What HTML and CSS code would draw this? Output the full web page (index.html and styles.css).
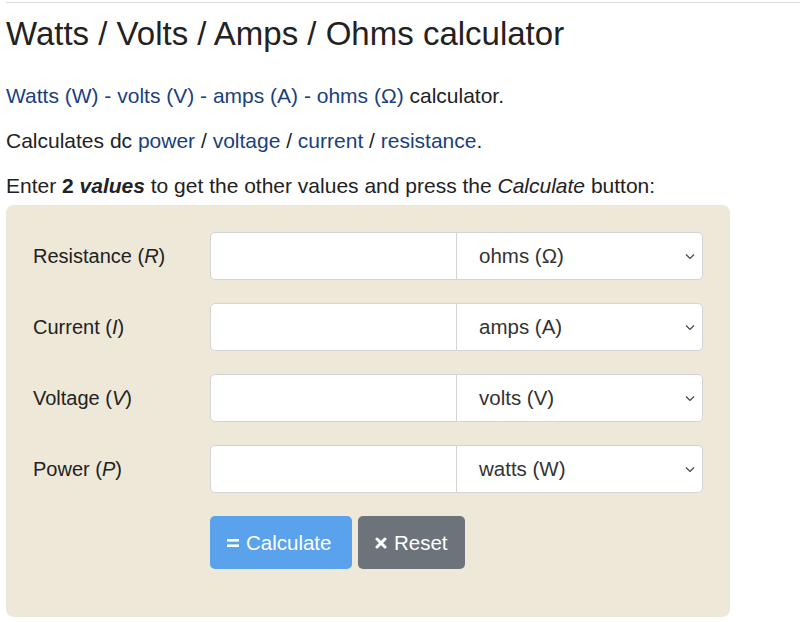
FILE: index.html
```html
<!DOCTYPE html>
<html>
<head>
<meta charset="utf-8">
<link rel="stylesheet" href="styles.css">
</head>
<body>
<div class="page">
  <hr class="topline">
  <h1 class="title">Watts / Volts / Amps / Ohms calculator</h1>
  <p class="intro"><span class="lk"><a href="#">Watts (W)</a> - <a href="#">volts (V)</a> - <a href="#">amps (A)</a> - <a href="#">ohms (Ω)</a></span> calculator.</p>
  <p class="intro">Calculates dc <a href="#">power</a> / <a href="#">voltage</a> / <a href="#">current</a> / <a href="#">resistance</a>.</p>
  <p class="intro">Enter <b>2 <i>values</i></b> to get the other values and press the <i>Calculate</i> button:</p>
  <form class="panel">
    <label class="lbl">Resistance (<i>R</i>)</label>
    <div class="group">
      <input class="num" type="text">
      <div class="sel"><span>ohms (Ω)</span><svg class="chev" width="10" height="7" viewBox="0 0 10 7"><path d="M1 1.5 L5 5.5 L9 1.5" fill="none" stroke="#444" stroke-width="1.2"/></svg></div>
    </div>
    <label class="lbl">Current (<i>I</i>)</label>
    <div class="group">
      <input class="num" type="text">
      <div class="sel"><span>amps (A)</span><svg class="chev" width="10" height="7" viewBox="0 0 10 7"><path d="M1 1.5 L5 5.5 L9 1.5" fill="none" stroke="#444" stroke-width="1.2"/></svg></div>
    </div>
    <label class="lbl">Voltage (<i>V</i>)</label>
    <div class="group">
      <input class="num" type="text">
      <div class="sel"><span>volts (V)</span><svg class="chev" width="10" height="7" viewBox="0 0 10 7"><path d="M1 1.5 L5 5.5 L9 1.5" fill="none" stroke="#444" stroke-width="1.2"/></svg></div>
    </div>
    <label class="lbl">Power (<i>P</i>)</label>
    <div class="group">
      <input class="num" type="text">
      <div class="sel"><span>watts (W)</span><svg class="chev" width="10" height="7" viewBox="0 0 10 7"><path d="M1 1.5 L5 5.5 L9 1.5" fill="none" stroke="#444" stroke-width="1.2"/></svg></div>
    </div>
    <div></div>
    <div class="buttons">
      <button type="button" class="btn calc"><svg width="12" height="10" viewBox="0 0 12 10"><rect x="0" y="1" width="12" height="2.6" fill="#fff"/><rect x="0" y="6.4" width="12" height="2.6" fill="#fff"/></svg>Calculate</button>
      <button type="button" class="btn reset"><svg width="12" height="12" viewBox="0 0 12 12"><path d="M2 2 L10 10 M10 2 L2 10" stroke="#fff" stroke-width="3" stroke-linecap="round"/></svg>Reset</button>
    </div>
  </form>
</div>
</body>
</html>
```
FILE: styles.css
```css
html, body {
  margin: 0;
  padding: 0;
  background: #fff;
}
body {
  font-family: "Liberation Sans", Arial, sans-serif;
  color: #222;
}
.page {
  padding-left: 6px;
  padding-top: 2px;
}
.topline {
  margin: 0;
  border: 0;
  border-top: 1px solid #dcdcdc;
  height: 0;
}
.title {
  font-size: 33px;
  font-weight: normal;
  margin: 11px 0 0 0;
  line-height: 40px;
}
.intro {
  font-size: 21px;
  line-height: 28px;
  margin: 17px 0 0 0;
}
.title + .intro {
  margin-top: 28px;
}
.lk {
  color: #1a3f80;
}
.intro a {
  color: #1a3f80;
  text-decoration: none;
}
.panel {
  margin-top: 5px;
  width: 724px;
  box-sizing: border-box;
  background: #ede8d8;
  border-radius: 8px;
  padding: 27px 27px 48px 27px;
  display: grid;
  grid-template-columns: 177px 1fr;
  row-gap: 23px;
  align-items: center;
}
.lbl {
  font-size: 20px;
  color: #222;
}
.group {
  display: flex;
  height: 48px;
}
.num {
  width: 247px;
  box-sizing: border-box;
  height: 48px;
  border: 1px solid #d4d4d4;
  border-radius: 5px 0 0 5px;
  background: #fff;
  margin: 0;
  padding: 0 12px;
  font-size: 20px;
}
.sel {
  flex: 1;
  box-sizing: border-box;
  height: 48px;
  border: 1px solid #d4d4d4;
  margin-left: -1px;
  border-radius: 0 5px 5px 0;
  background: #fff;
  display: flex;
  align-items: center;
  justify-content: space-between;
  padding: 0 7px 0 22px;
  font-size: 20.5px;
  color: #333;
}
.chev {
  display: block;
}
.buttons {
  display: flex;
  gap: 6px;
}
.btn {
  height: 53px;
  border: 0;
  border-radius: 5px;
  color: #fff;
  font-family: "Liberation Sans", Arial, sans-serif;
  font-size: 20.5px;
  display: flex;
  align-items: center;
  gap: 7px;
  padding: 0 17px;
}
.calc {
  background: #5aa2ec;
  width: 142px;
}
.reset {
  background: #6c737b;
  width: 107px;
}
```
